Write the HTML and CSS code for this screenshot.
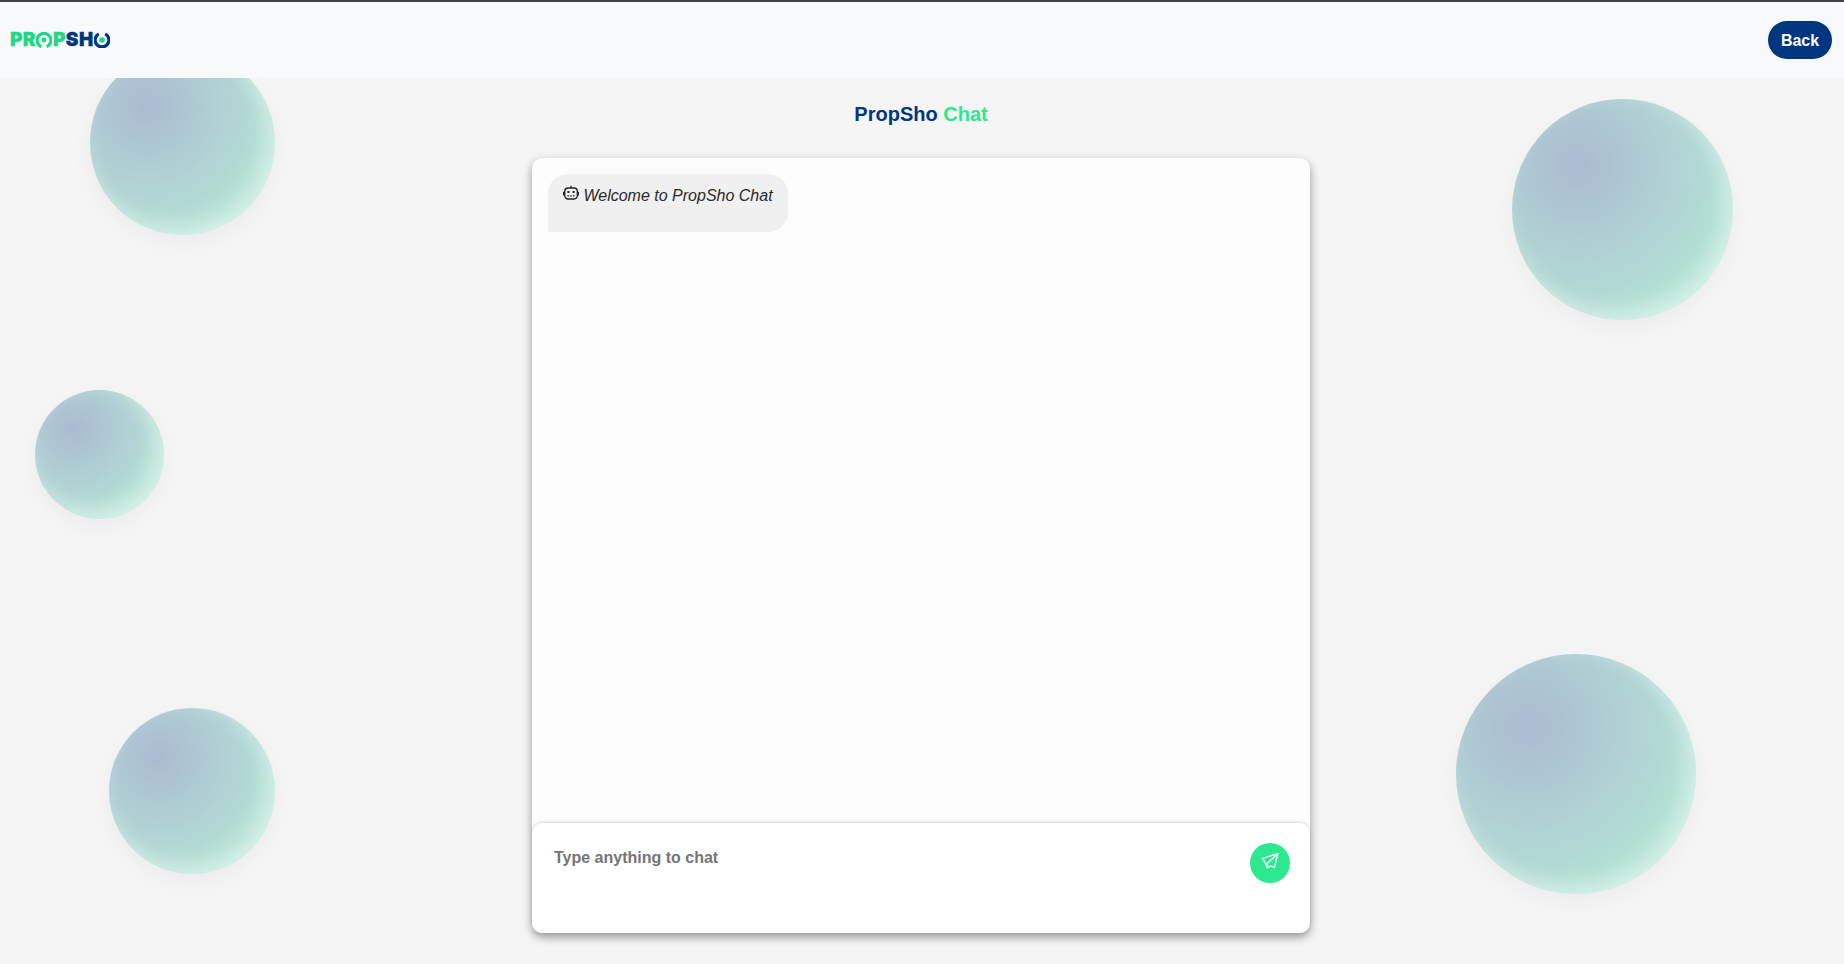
FILE: index.html
```html
<!DOCTYPE html>
<html lang="en">
<head>
  <meta charset="UTF-8">
  <meta name="viewport" content="width=device-width, initial-scale=1.0">
  <title>PropSho Chat</title>
  <link rel="stylesheet" href="styles.css">
</head>
<body>
  <!-- Background bubbles -->
  <div class="bubble bubble-one"></div>
  <div class="bubble bubble-two"></div>
  <div class="bubble bubble-three"></div>
  <div class="bubble bubble-four"></div>
  <div class="bubble bubble-five"></div>

  <header class="topbar">
    <div class="logo">
      <span class="logo-green">PR</span>
      <svg class="logo-ring" viewBox="0 0 16 16"><path d="M5.4 14.7A6.9 6.9 0 1 1 10.6 14.7" fill="none" stroke="#1fd884" stroke-width="3.2"/><circle cx="8" cy="8" r="2.4" fill="#1fd884"/></svg>
      <span class="logo-green">P</span>
      <span class="logo-blue">SH</span>
      <svg class="logo-ring" viewBox="0 0 16 16"><path d="M11.2 1.9A6.9 6.9 0 1 1 4.8 1.9" fill="none" stroke="#003580" stroke-width="3.2"/><circle cx="8" cy="8" r="2.8" fill="#1fd884"/></svg>
    </div>
    <button class="back-btn">Back</button>
  </header>

  <main class="page">
    <h1 class="title">PropSho <span class="title-green">Chat</span></h1>

    <div class="chat-card">
      <div class="messages">
        <div class="bot-message">
          <svg class="bot-icon" viewBox="0 0 16 16" fill="none" stroke="#222" stroke-width="1.3">
            <rect x="1.7" y="3" width="12.6" height="11" rx="3.4"/>
            <path d="M8 3V.8"/>
            <path d="M.6 6.8v3.6M15.4 6.8v3.6"/>
            <rect x="4.4" y="6" width="2" height="2" fill="#222" stroke="none"/>
            <rect x="9.6" y="6" width="2" height="2" fill="#222" stroke="none"/>
            <path d="M4.4 10.8h1.6M7.2 10.8h1.6M10 10.8h1.6"/>
          </svg>
          <em>Welcome to PropSho Chat</em>
        </div>
      </div>

      <div class="chat-input">
        <textarea class="chat-text" placeholder="Type anything to chat"></textarea>
        <button class="send-btn">
          <svg viewBox="0 0 16 16" fill="none" stroke="#fff" stroke-width="1.2" stroke-linejoin="round">
            <path d="M15 1.5 1.4 5.6 3.6 9.4 5.4 14.2 8.6 12.4 12 13.6Z"/>
            <path d="M15 1.5 5.4 10.2 5.4 14.2"/>
          </svg>
        </button>
      </div>
    </div>
  </main>
</body>
</html>
```

FILE: styles.css
```css
* {
  box-sizing: border-box;
}
html, body {
  height: 100%;
}
body {
  margin: 0;
  font-family: "Liberation Sans", Arial, sans-serif;
  background: #f5f5f5;
  border-top: 2px solid #444;
  overflow: hidden;
  position: relative;
}
.topbar {
  height: 76px;
  padding: 0 12px 0 10px;
  display: flex;
  align-items: center;
  justify-content: space-between;
  background: #f8f9fb;
  position: relative;
  z-index: 2;
}
.logo {
  display: flex;
  align-items: center;
  font-family: Inter, sans-serif;
  font-weight: 900;
  font-size: 19px;
  line-height: 14px;
  letter-spacing: .4px;
  -webkit-text-stroke: .3px currentColor;
}
.logo-green {
  color: #1fd884;
}
.logo-blue {
  color: #003580;
}
.logo-ring {
  width: 16px;
  height: 16px;
  margin: 0 .5px;
}
.back-btn {
  width: 64px;
  height: 38px;
  padding: 1px 0 0;
  border: none;
  border-radius: 19px;
  background: #003580;
  color: white;
  font-family: inherit;
  font-size: 16px;
  font-weight: bold;
  cursor: pointer;
}
.page {
  padding-right: 2px;
  display: flex;
  flex-direction: column;
  align-items: center;
  position: relative;
  z-index: 1;
}
.title {
  margin: 25px 0 0;
  height: 55px;
  font-size: 20px;
  line-height: 23px;
  color: #003580;
}
.title-green {
  color: #2ce98f;
}
.chat-card {
  width: 778px;
  height: 775px;
  display: flex;
  flex-direction: column;
  background: #fdfdfd;
  border-radius: 10px;
  box-shadow: 0 4px 10px rgba(0, 0, 0, 0.4);
}
.messages {
  flex: 1;
  padding: 16px;
}
.bot-message {
  width: 240px;
  height: 58px;
  padding: 10px 15px;
  background: #f0f0f0;
  border-radius: 20px 20px 20px 0;
  color: #2a2a2a;
  font-size: 16px;
  line-height: 24px;
}
.bot-icon {
  width: 16px;
  height: 16px;
  vertical-align: 0;
}
.chat-input {
  height: 110px;
  padding: 20px 20px 0 22px;
  display: flex;
  justify-content: space-between;
  background: white;
  border-radius: 10px;
  box-shadow: 0 -1px 3px rgba(0, 0, 0, 0.15);
}
.chat-text {
  flex: 1;
  height: 60px;
  padding: 3px 0 0;
  border: none;
  outline: none;
  resize: none;
  background: transparent;
  font-family: inherit;
  font-size: 16px;
  font-weight: bold;
  line-height: 24px;
  color: #222;
}
.chat-text::placeholder {
  color: #757575;
}
.send-btn {
  width: 40px;
  height: 40px;
  padding: 0;
  border: none;
  border-radius: 50%;
  background: #2ce98f;
  display: flex;
  align-items: center;
  justify-content: center;
  cursor: pointer;
}
.send-btn svg {
  width: 18px;
  height: 18px;
  margin: -5px 1px 0 0;
}

/* Bubbles */
.bubble {
  position: absolute;
  border-radius: 50%;
  background: radial-gradient(circle at 30% 30%, rgba(0, 53, 128, 0.3), rgba(38, 230, 140, 0.3));
  box-shadow: inset -8px -8px 20px rgba(255, 255, 255, 0.45), 0 8px 24px rgba(0, 0, 0, 0.04);
}
.bubble-one {
  left: 90px;
  top: 48px;
  width: 185px;
  height: 185px;
}
.bubble-two {
  left: 1512px;
  top: 97px;
  width: 221px;
  height: 221px;
}
.bubble-three {
  left: 35px;
  top: 388px;
  width: 129px;
  height: 129px;
}
.bubble-four {
  left: 109px;
  top: 706px;
  width: 166px;
  height: 166px;
}
.bubble-five {
  left: 1456px;
  top: 652px;
  width: 240px;
  height: 240px;
}
```
